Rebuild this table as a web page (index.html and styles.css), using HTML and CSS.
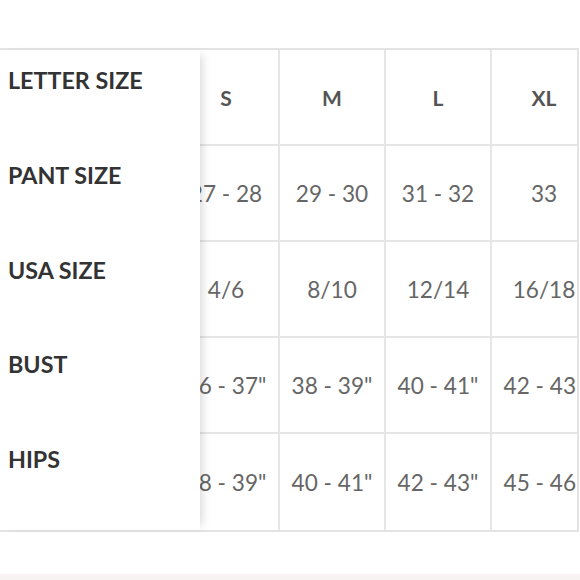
FILE: index.html
```html
<!DOCTYPE html>
<html>
<head>
<meta charset="utf-8">
<link rel="stylesheet" href="styles.css">
</head>
<body>
<div class="page">
  <div class="chart">
    <div class="labels">
      <div class="label">LETTER SIZE</div>
      <div class="label">PANT SIZE</div>
      <div class="label">USA SIZE</div>
      <div class="label">BUST</div>
      <div class="label">HIPS</div>
    </div>
    <div class="scroller">
      <div class="grid">
        <div class="row head">
          <div class="cell">S</div><div class="cell">M</div><div class="cell">L</div><div class="cell">XL</div>
        </div>
        <div class="row">
          <div class="cell">27 - 28</div><div class="cell">29 - 30</div><div class="cell">31 - 32</div><div class="cell">33</div>
        </div>
        <div class="row">
          <div class="cell">4/6</div><div class="cell">8/10</div><div class="cell">12/14</div><div class="cell">16/18</div>
        </div>
        <div class="row">
          <div class="cell">36 - 37"</div><div class="cell">38 - 39"</div><div class="cell">40 - 41"</div><div class="cell">42 - 43"</div>
        </div>
        <div class="row last">
          <div class="cell">38 - 39"</div><div class="cell">40 - 41"</div><div class="cell">42 - 43"</div><div class="cell">45 - 46"</div>
        </div>
      </div>
    </div>
  </div>
  <div class="footer-strip"></div>
</div>
</body>
</html>
```

FILE: styles.css
```css
html, body {
  margin: 0;
  padding: 0;
  background: #ffffff;
}
body {
  width: 580px;
  height: 580px;
  overflow: hidden;
  font-family: Lato, "Open Sans", sans-serif;
}
.page {
  display: flex;
  flex-direction: column;
  height: 580px;
  padding-top: 48px;
  box-sizing: border-box;
}
.chart {
  display: flex;
  width: 579px;
  border-top: 2px solid #e3e3e3;
  border-bottom: 2px solid #e3e3e3;
  border-right: 2px solid #e3e3e3;
  box-sizing: border-box;
}
.labels {
  width: 200px;
  flex: none;
  display: flex;
  flex-direction: column;
  background: #fff;
  position: relative;
  z-index: 2;
  box-shadow: 7px 0 9px -5px rgba(0, 0, 0, 0.16);
}
.label {
  height: 94.8px;
  flex: none;
  box-sizing: border-box;
  padding: 17px 8px 0;
  font-size: 23.3px;
  font-weight: 700;
  color: #333;
  line-height: 1.2;
  white-space: nowrap;
}
.scroller {
  flex: 1;
  overflow: hidden;
}
.grid {
  display: flex;
  flex-direction: column;
  margin-left: -26px;
}
.row {
  display: flex;
  height: 96px;
  box-sizing: border-box;
  border-bottom: 2px solid #e6e6e6;
}
.row.last {
  border-bottom: none;
}
.cell {
  width: 106px;
  flex: none;
  box-sizing: border-box;
  border-right: 2px solid #e6e6e6;
  display: flex;
  align-items: center;
  justify-content: center;
  font-size: 22.6px;
  color: #666;
  white-space: nowrap;
}
.head .cell {
  font-weight: 700;
  font-size: 21px;
  color: #555;
  padding-top: 0;
}
.footer-strip {
  margin-top: auto;
  height: 6px;
  background: #f8f3f3;
}
```
